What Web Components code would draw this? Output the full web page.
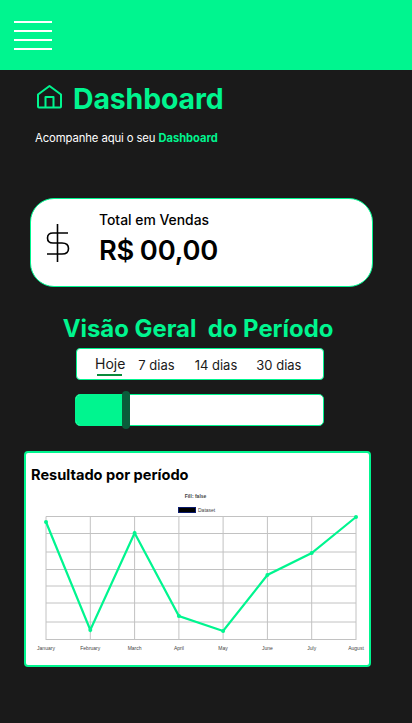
<!DOCTYPE html>
<html lang="pt-BR">
<head>
<meta charset="utf-8">
<title>Dashboard</title>
<style>
    html, body {
        margin: 0;
        padding: 0;
        background: #1a1a1a;
        font-family: Inter, "Liberation Sans", sans-serif;
    }
    body {
        width: 412px;
        height: 723px;
        overflow: hidden;
    }
</style>
</head>
<body>
<app-header></app-header>
<page-title></page-title>
<sales-card label="Total em Vendas" value="R$ 00,00"></sales-card>
<period-view></period-view>
<result-chart></result-chart>

<script>
const GREEN = '#00f58f';

class AppHeader extends HTMLElement {
    constructor() {
        super();
        this.attachShadow({ mode: 'open' }).innerHTML = `
        <style>
            :host { display: block; height: 70px; background: ${GREEN}; padding: 21px 0 0 14px; box-sizing: border-box; }
            .menu { display: flex; flex-direction: column; gap: 7.2px; width: 38px; }
            .menu span { display: block; height: 1.8px; background: #fff; }
        </style>
        <div class="menu"><span></span><span></span><span></span><span></span></div>`;
    }
}

class PageTitle extends HTMLElement {
    constructor() {
        super();
        this.attachShadow({ mode: 'open' }).innerHTML = `
        <style>
            :host { display: block; padding: 14px 0 0 35px; color: #fff; }
            .row { display: flex; align-items: center; gap: 9px; height: 30px; padding-left: 1px; }
            svg { width: 28px; height: 26px; display: block; margin-top: -4px; }
            h1 { margin: 0; font-size: 28.4px; line-height: 30px; font-weight: 700; letter-spacing: -.1px; color: ${GREEN}; }
            p { margin: 16px 0 0; font-size: 11.3px; line-height: 16px; font-weight: 400; letter-spacing: -.1px; }
            b { font-weight: 700; color: ${GREEN}; font-size: 11.1px; letter-spacing: 0; }
        </style>
        <div class="row">
            <svg viewBox="0 0 28 26" fill="none" stroke="${GREEN}" stroke-width="2" stroke-linejoin="round">
                <path d="M2 10.5 L13.5 2 L25 10.5 V22.5 Q25 23.5 24 23.5 H3 Q2 23.5 2 22.5 Z"/>
                <path d="M9.5 23.5 V13 H17.5 V23.5"/>
            </svg>
            <h1>Dashboard</h1>
        </div>
        <p>Acompanhe aqui o seu <b>Dashboard</b></p>`;
    }
}

class SalesCard extends HTMLElement {
    constructor() {
        super();
        this.attachShadow({ mode: 'open' }).innerHTML = `
        <style>
            :host { display: flex; align-items: center; box-sizing: border-box; width: 343px; height: 89px; margin: 52px 0 0 30px; padding: 0 0 0 15px; background: #fff; border: 1px solid ${GREEN}; border-radius: 24px; color: #000; }
            svg { width: 24px; height: 38px; display: block; flex: none; margin-top: 1px; }
            .text { margin-left: 29px; display: flex; flex-direction: column; margin-top: -6px; }
            .label { font-size: 13.9px; line-height: 16px; font-weight: 500; }
            .value { font-size: 27.3px; line-height: 34px; font-weight: 600; margin-top: 6px; letter-spacing: -.2px; word-spacing: -1px; }
        </style>
        <svg viewBox="0 0 24 38" fill="none" stroke="#000" stroke-width="1.6">
            <path d="M11.5 0 V38"/>
            <path d="M22 9 H7 Q1.500 9 1.500 14 Q1.500 19 7 19 H16 Q22.500 19 22.500 24.500 Q22.500 30 16 30 H1"/>
        </svg>
        <div class="text">
            <span class="label">${this.getAttribute('label')}</span>
            <span class="value">${this.getAttribute('value')}</span>
        </div>`;
    }
}

class PeriodTabs extends HTMLElement {
    constructor() {
        super();
        this.attachShadow({ mode: 'open' }).innerHTML = `
        <style>
            :host { display: flex; align-items: center; box-sizing: border-box; width: 248px; height: 32px; margin-left: 76px; padding-left: 18px; background: #fff; border: 1px solid ${GREEN}; border-radius: 4px; color: #1a1a1a; font-size: 13px; }
            span { display: block; white-space: nowrap; margin-top: 2px; }
            .active { position: relative; font-size: 14px; margin: 0 13px 2px 0; }
            .active::after { content: ''; position: absolute; left: 2px; right: 3px; bottom: -4px; height: 1.5px; background: #0a8a3c; }
            .d14 { margin-left: 20px; }
            .d30 { margin-left: 19px; }
        </style>
        <span class="active">Hoje</span><span>7 dias</span><span class="d14">14 dias</span><span class="d30">30 dias</span>`;
    }
}

class PeriodSlider extends HTMLElement {
    constructor() {
        super();
        this.attachShadow({ mode: 'open' }).innerHTML = `
        <style>
            :host { display: block; position: relative; box-sizing: border-box; width: 249px; height: 32px; margin: 14px 0 0 75px; background: #fff; border: 1px solid ${GREEN}; border-radius: 5px; }
            .fill { width: 47px; height: 100%; background: ${GREEN}; border-radius: 4px 0 0 4px; }
            .thumb { position: absolute; left: 46px; top: -4px; width: 8px; height: 38px; background: #0a5c3a; border-radius: 4px; }
        </style>
        <div class="fill"></div><div class="thumb"></div>`;
    }
}

class PeriodView extends HTMLElement {
    constructor() {
        super();
        this.attachShadow({ mode: 'open' }).innerHTML = `
        <style>
            :host { display: block; margin-top: 27px; }
            h2 { margin: 0 0 4px; height: 30px; font-size: 23.9px; line-height: 30px; font-weight: 700; color: ${GREEN}; text-align: center; white-space: pre; padding-right: 16px; }
        </style>
        <h2>Visão Geral  do Período</h2>
        <period-tabs></period-tabs>
        <period-slider></period-slider>`;
    }
}

class ResultChart extends HTMLElement {
    constructor() {
        super();
        const xs = [46, 90.3, 134.6, 178.9, 223.1, 267.4, 311.7, 356];
        const ys = [516.5, 533.5, 552, 569.5, 586, 603, 622, 639.5];
        const labels = ['January', 'February', 'March', 'April', 'May', 'June', 'July', 'August'];
        const data = [522, 630, 533, 616, 631, 575, 553, 517];
        const ox = 26, oy = 453;

        const vLines = xs.map(x => `<line x1="${x - ox}" x2="${x - ox}" y1="${516.5 - oy}" y2="${640 - oy}"/>`).join('');
        const hLines = ys.map(y => `<line x1="${46 - ox}" x2="${356 - ox}" y1="${y - oy}" y2="${y - oy}"/>`).join('');
        const ticks = labels.map((l, i) => `<text x="${xs[i] - ox}" y="${650 - oy}" text-anchor="middle">${l}</text>`).join('');
        const pts = data.map((v, i) => `${xs[i] - ox},${v - oy}`).join(' ');
        const dots = data.map((v, i) => `<circle cx="${xs[i] - ox}" cy="${v - oy}" r="2"/>`).join('');

        this.attachShadow({ mode: 'open' }).innerHTML = `
        <style>
            :host { display: block; position: relative; box-sizing: border-box; width: 347px; height: 216px; margin: 25px 0 0 24px; background: #fff; border: 2px solid ${GREEN}; border-radius: 4px; }
            h3 { margin: 0; padding: 13px 0 0 5px; font-size: 14.6px; line-height: 18px; font-weight: 700; color: #000; }
            svg { position: absolute; left: 0; top: 0; width: 343px; height: 212px; }
            .grid line { stroke: #c2c2c2; stroke-width: 1; }
            text { font-family: "Liberation Sans", sans-serif; font-size: 5px; fill: #444; }
            .fill-title { font-weight: 700; }
        </style>
        <h3>Resultado por período</h3>
        <svg viewBox="0 0 343 212">
            <text class="fill-title" x="169.500" y="${498 - oy}" text-anchor="middle">Fill: false</text>
            <rect x="152.500" y="${507.500 - oy}" width="17" height="5" fill="#000" stroke="#0a1a6e" stroke-width="1"/>
            <text x="172" y="${512 - oy}">Dataset</text>
            <g class="grid">${vLines}${hLines}</g>
            <g>${ticks}</g>
            <polyline points="${pts}" fill="none" stroke="${GREEN}" stroke-width="2.2"/>
            <g fill="${GREEN}">${dots}</g>
        </svg>`;
    }
}

customElements.define('app-header', AppHeader);
customElements.define('page-title', PageTitle);
customElements.define('sales-card', SalesCard);
customElements.define('period-tabs', PeriodTabs);
customElements.define('period-slider', PeriodSlider);
customElements.define('period-view', PeriodView);
customElements.define('result-chart', ResultChart);
</script>
</body>
</html>
